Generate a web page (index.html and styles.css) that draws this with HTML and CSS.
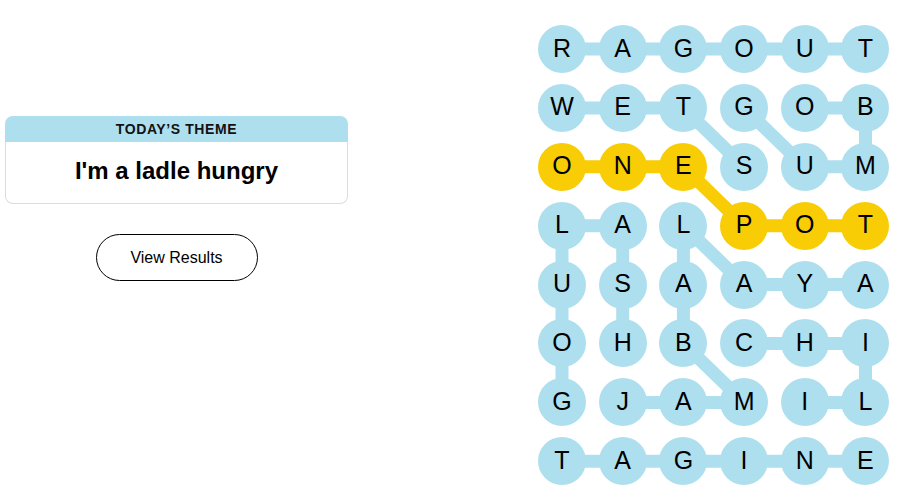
FILE: index.html
```html
<!DOCTYPE html>
<html lang="en">
<head>
<meta charset="utf-8">
<title>Strands</title>
<link rel="stylesheet" href="styles.css">
</head>
<body>
<main class="page">
  <section class="side">
    <div class="theme-card">
      <div class="theme-head">TODAY’S THEME</div>
      <div class="theme-body">I'm a ladle hungry</div>
    </div>
    <button class="results-btn" type="button">View Results</button>
  </section>

  <section class="board">
    <svg class="links" width="352" height="461" viewBox="0 0 352 461" aria-hidden="true">
      <g stroke="#aedfee" stroke-width="13" fill="none">
        <line x1="24" y1="24" x2="327.5" y2="24"/>
        <line x1="24" y1="82.9" x2="145.4" y2="82.9"/>
        <line x1="266.8" y1="82.9" x2="327.5" y2="82.9"/>
        <line x1="145.4" y1="82.9" x2="206.1" y2="141.8"/>
        <line x1="206.1" y1="82.9" x2="266.8" y2="141.8"/>
        <line x1="327.5" y1="82.9" x2="327.5" y2="141.8"/>
        <line x1="266.8" y1="141.8" x2="327.5" y2="141.8"/>
        <line x1="24" y1="200.7" x2="84.7" y2="200.7"/>
        <line x1="24" y1="200.7" x2="24" y2="377.4"/>
        <line x1="84.7" y1="200.7" x2="84.7" y2="318.5"/>
        <line x1="145.4" y1="200.7" x2="145.4" y2="318.5"/>
        <line x1="145.4" y1="200.7" x2="206.1" y2="259.6"/>
        <line x1="206.1" y1="259.6" x2="327.5" y2="259.6"/>
        <line x1="145.4" y1="318.5" x2="206.1" y2="377.4"/>
        <line x1="84.7" y1="377.4" x2="206.1" y2="377.4"/>
        <line x1="206.1" y1="318.5" x2="327.5" y2="318.5"/>
        <line x1="327.5" y1="318.5" x2="327.5" y2="377.4"/>
        <line x1="266.8" y1="377.4" x2="327.5" y2="377.4"/>
        <line x1="24" y1="436.3" x2="327.5" y2="436.3"/>
      </g>
      <polyline points="24,141.8 145.4,141.8 206.1,200.7 327.5,200.7" stroke="#f8cd05" stroke-width="13" fill="none"/>
    </svg>
    <div class="grid">
      <div class="cell">R</div><div class="cell">A</div><div class="cell">G</div><div class="cell">O</div><div class="cell">U</div><div class="cell">T</div>
      <div class="cell">W</div><div class="cell">E</div><div class="cell">T</div><div class="cell">G</div><div class="cell">O</div><div class="cell">B</div>
      <div class="cell span">O</div><div class="cell span">N</div><div class="cell span">E</div><div class="cell">S</div><div class="cell">U</div><div class="cell">M</div>
      <div class="cell">L</div><div class="cell">A</div><div class="cell">L</div><div class="cell span">P</div><div class="cell span">O</div><div class="cell span">T</div>
      <div class="cell">U</div><div class="cell">S</div><div class="cell">A</div><div class="cell">A</div><div class="cell">Y</div><div class="cell">A</div>
      <div class="cell">O</div><div class="cell">H</div><div class="cell">B</div><div class="cell">C</div><div class="cell">H</div><div class="cell">I</div>
      <div class="cell">G</div><div class="cell">J</div><div class="cell">A</div><div class="cell">M</div><div class="cell">I</div><div class="cell">L</div>
      <div class="cell">T</div><div class="cell">A</div><div class="cell">G</div><div class="cell">I</div><div class="cell">N</div><div class="cell">E</div>
    </div>
  </section>
</main>
</body>
</html>
```

FILE: styles.css
```css
* { box-sizing: border-box; }

html, body {
  margin: 0;
  padding: 0;
  background: #ffffff;
  font-family: "Liberation Sans", Arial, sans-serif;
  color: #000;
}

.page {
  display: flex;
  align-items: flex-start;
  padding: 25px 0 0 5px;
  gap: 190px;
}

.side {
  width: 343px;
  padding-top: 91px;
  display: flex;
  flex-direction: column;
  align-items: stretch;
}

.theme-card {
  background: #fff;
}

.theme-head {
  height: 26px;
  background: #aedfee;
  border-radius: 8px 8px 0 0;
  font-size: 14px;
  font-weight: 700;
  letter-spacing: 0.6px;
  line-height: 27px;
  text-align: center;
  color: #121212;
}

.theme-body {
  border: 1px solid #dcdcdc;
  border-top: none;
  border-radius: 0 0 8px 8px;
  padding: 15px 0 18px;
  font-size: 24px;
  line-height: 28px;
  font-weight: 700;
  text-align: center;
  color: #000;
}

.results-btn {
  align-self: center;
  margin-top: 30px;
  width: 162px;
  height: 47px;
  border: 1px solid #000;
  border-radius: 24px;
  background: #fff;
  font-family: "Liberation Sans", Arial, sans-serif;
  font-size: 16px;
  color: #000;
  padding: 0;
}

.board {
  position: relative;
  width: 352px;
  height: 461px;
}

.links {
  position: absolute;
  left: 0;
  top: 0;
  z-index: 0;
}

.grid {
  position: relative;
  z-index: 1;
  display: grid;
  grid-template-columns: repeat(6, 48px);
  grid-auto-rows: 48px;
  column-gap: 12.7px;
  row-gap: 10.9px;
}

.cell {
  width: 48px;
  height: 48px;
  border-radius: 50%;
  background: #aedfee;
  display: flex;
  align-items: center;
  justify-content: center;
  font-size: 25px;
  line-height: 1;
  padding-bottom: 2px;
  color: #000;
}

.cell.span {
  background: #f8cd05;
}
```
